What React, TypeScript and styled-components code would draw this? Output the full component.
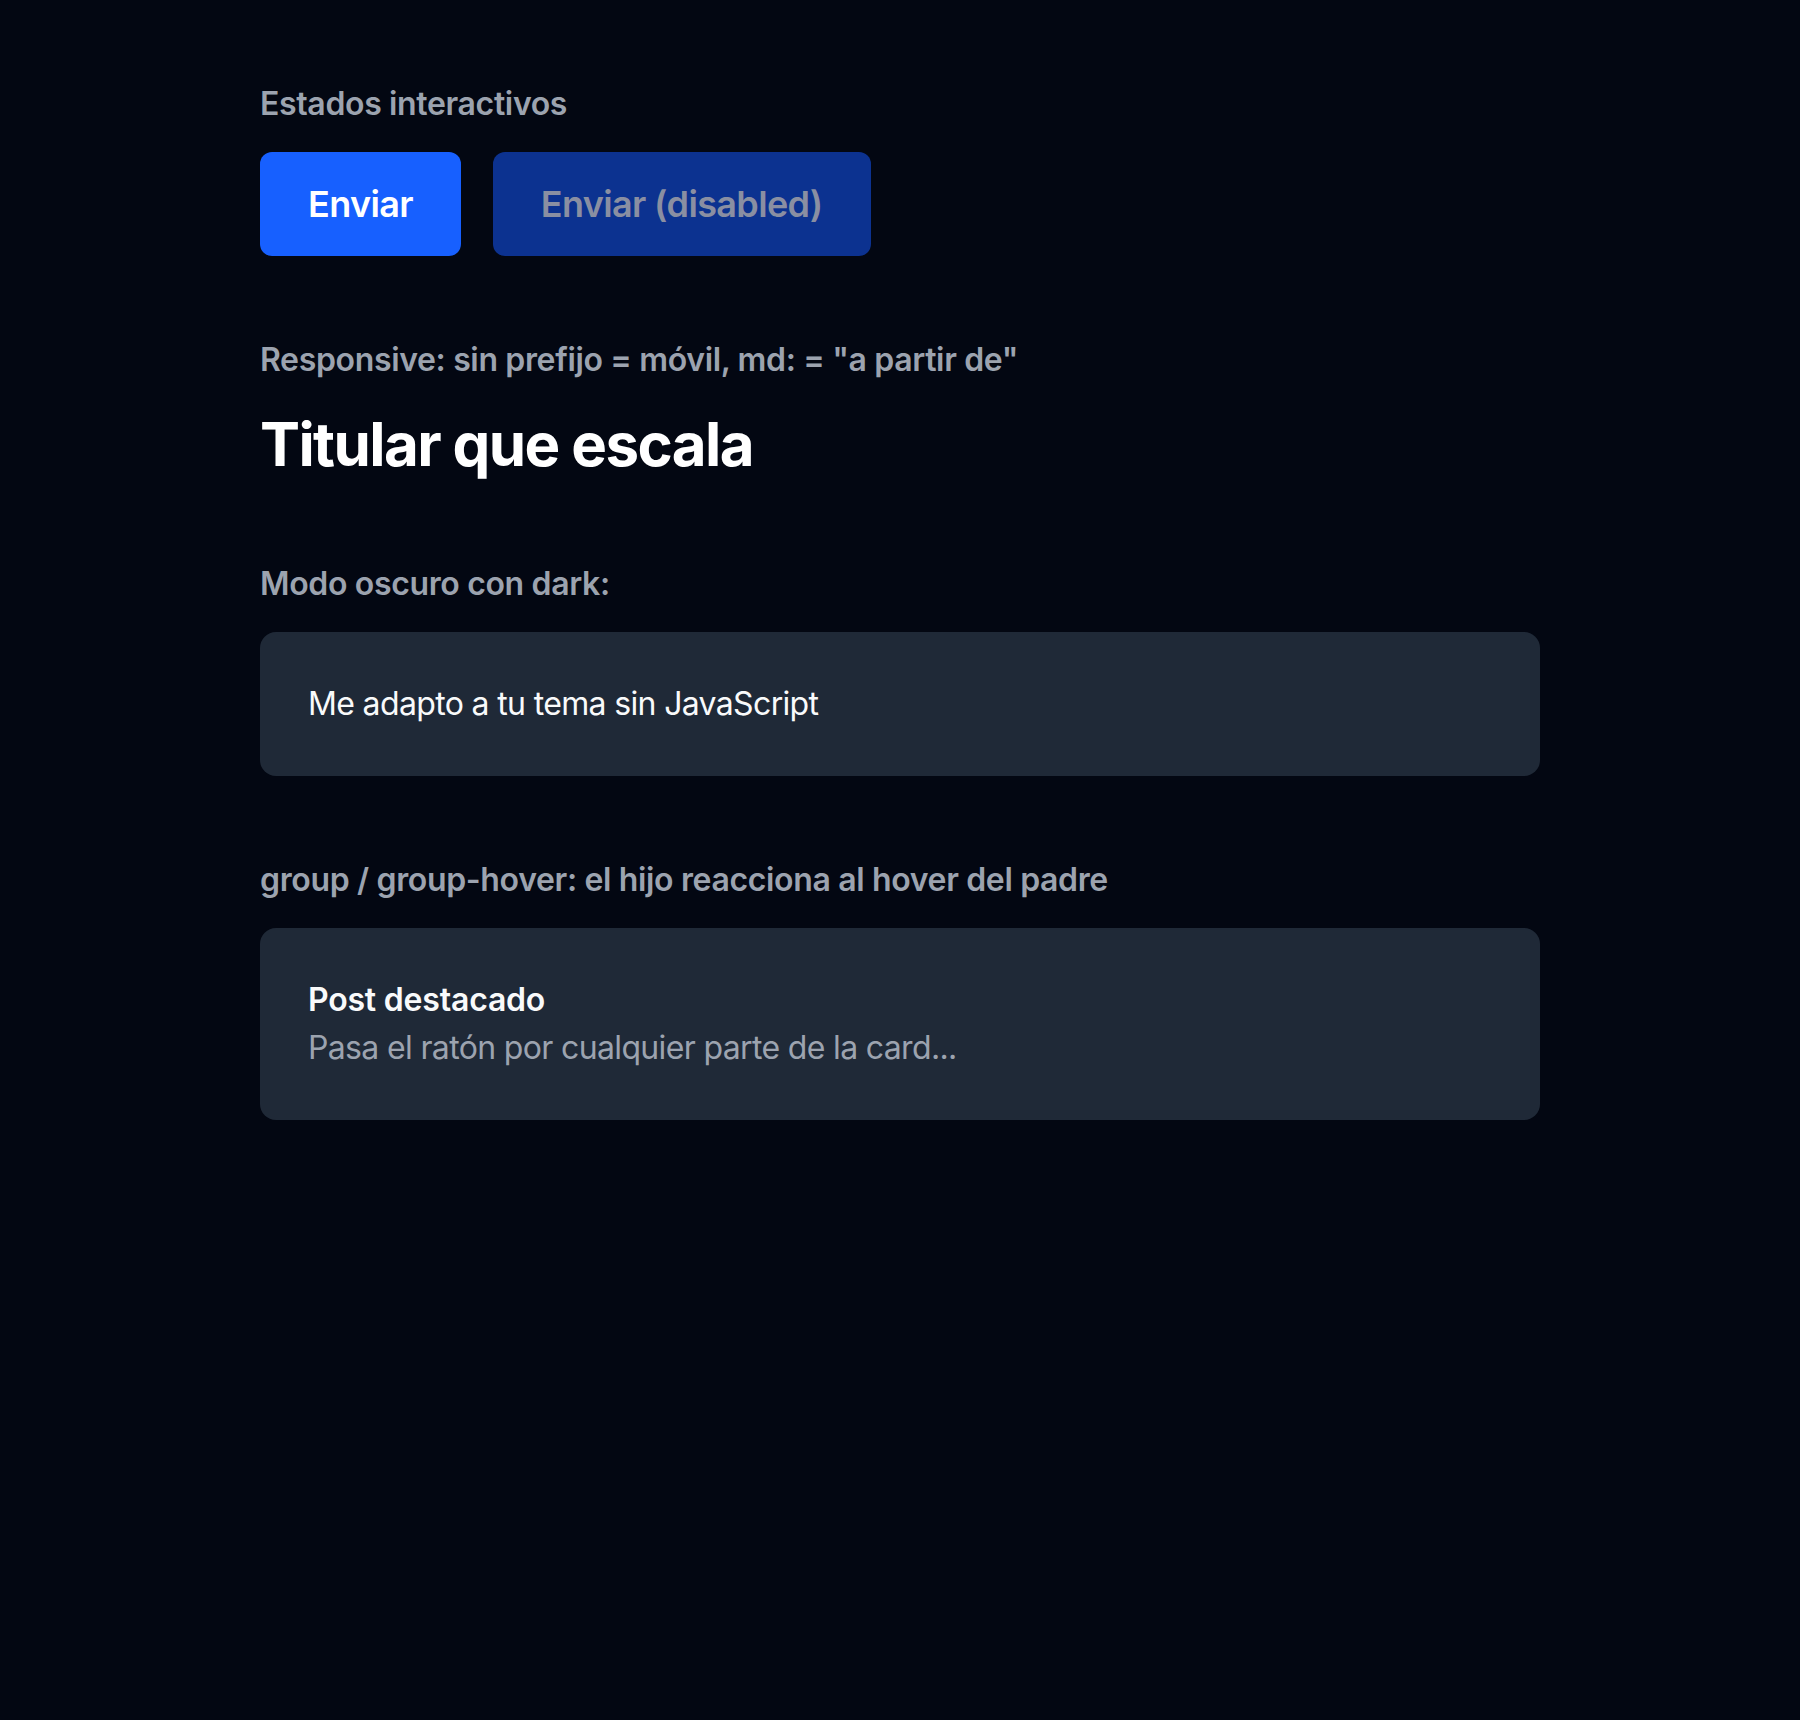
import React from 'react';
import styled, { createGlobalStyle } from 'styled-components';

const GlobalStyle = createGlobalStyle`
    html, body {
        margin: 0;
        padding: 0;
        background: #030712;
    }
    body {
        font-family: Inter, "Noto Sans", "Liberation Sans", sans-serif;
        color: #f9fafb;
        -webkit-font-smoothing: antialiased;
    }
`

const Page = styled.main`
    min-height: 1720px;
    background: #030712;
    padding: 80px 0;
    box-sizing: border-box;
`

const Container = styled.div`
    max-width: 1280px;
    margin: 0 auto;
    display: flex;
    flex-direction: column;
    gap: 80px;
`

const Section = styled.section`
    display: flex;
    flex-direction: column;
    gap: 24px;
`

const Label = styled.h2`
    margin: 0;
    font-size: 32px;
    line-height: 48px;
    font-weight: 600;
    color: #9ca3af;
    letter-spacing: -0.35px;
`

const ButtonRow = styled.div`
    display: flex;
    gap: 32px;
`

const Button = styled.button<{ $disabled?: boolean }>`
    font-family: inherit;
    font-size: 36px;
    line-height: 56px;
    font-weight: 600;
    letter-spacing: -0.65px;
    padding: 24px 48px;
    border: none;
    border-radius: 12px;
    background: ${props => props.$disabled ? '#0c3290' : '#1760ff'};
    color: ${props => props.$disabled ? '#8a8fa2' : '#ffffff'};
    cursor: ${props => props.$disabled ? 'not-allowed' : 'pointer'};
`

const Headline = styled.h1`
    margin: 0;
    font-size: 60px;
    line-height: 72px;
    font-weight: 700;
    letter-spacing: -1.6px;
    color: #ffffff;
`

const Card = styled.div`
    background: #1f2937;
    border-radius: 16px;
    padding: 48px;
    display: flex;
    flex-direction: column;
`

const CardText = styled.p<{ $muted?: boolean; $strong?: boolean }>`
    margin: 0;
    font-size: 32px;
    line-height: 48px;
    font-weight: ${props => props.$strong ? 600 : 400};
    color: ${props => props.$muted ? '#9ca3af' : '#f9fafb'};
    letter-spacing: ${props => props.$strong ? '-0.2px' : '-0.65px'};
`

const App: React.FC = () => {
    return (
        <>
            <GlobalStyle />
            <Page>
                <Container>
                    <Section>
                        <Label>Estados interactivos</Label>
                        <ButtonRow>
                            <Button>Enviar</Button>
                            <Button $disabled disabled>Enviar (disabled)</Button>
                        </ButtonRow>
                    </Section>

                    <Section>
                        <Label>Responsive: sin prefijo = móvil, md: = "a partir de"</Label>
                        <Headline>Titular que escala</Headline>
                    </Section>

                    <Section>
                        <Label>Modo oscuro con dark:</Label>
                        <Card>
                            <CardText>Me adapto a tu tema sin JavaScript</CardText>
                        </Card>
                    </Section>

                    <Section>
                        <Label>group / group-hover: el hijo reacciona al hover del padre</Label>
                        <Card>
                            <CardText $strong>Post destacado</CardText>
                            <CardText $muted>Pasa el ratón por cualquier parte de la card...</CardText>
                        </Card>
                    </Section>
                </Container>
            </Page>
        </>
    )
}

export default App
